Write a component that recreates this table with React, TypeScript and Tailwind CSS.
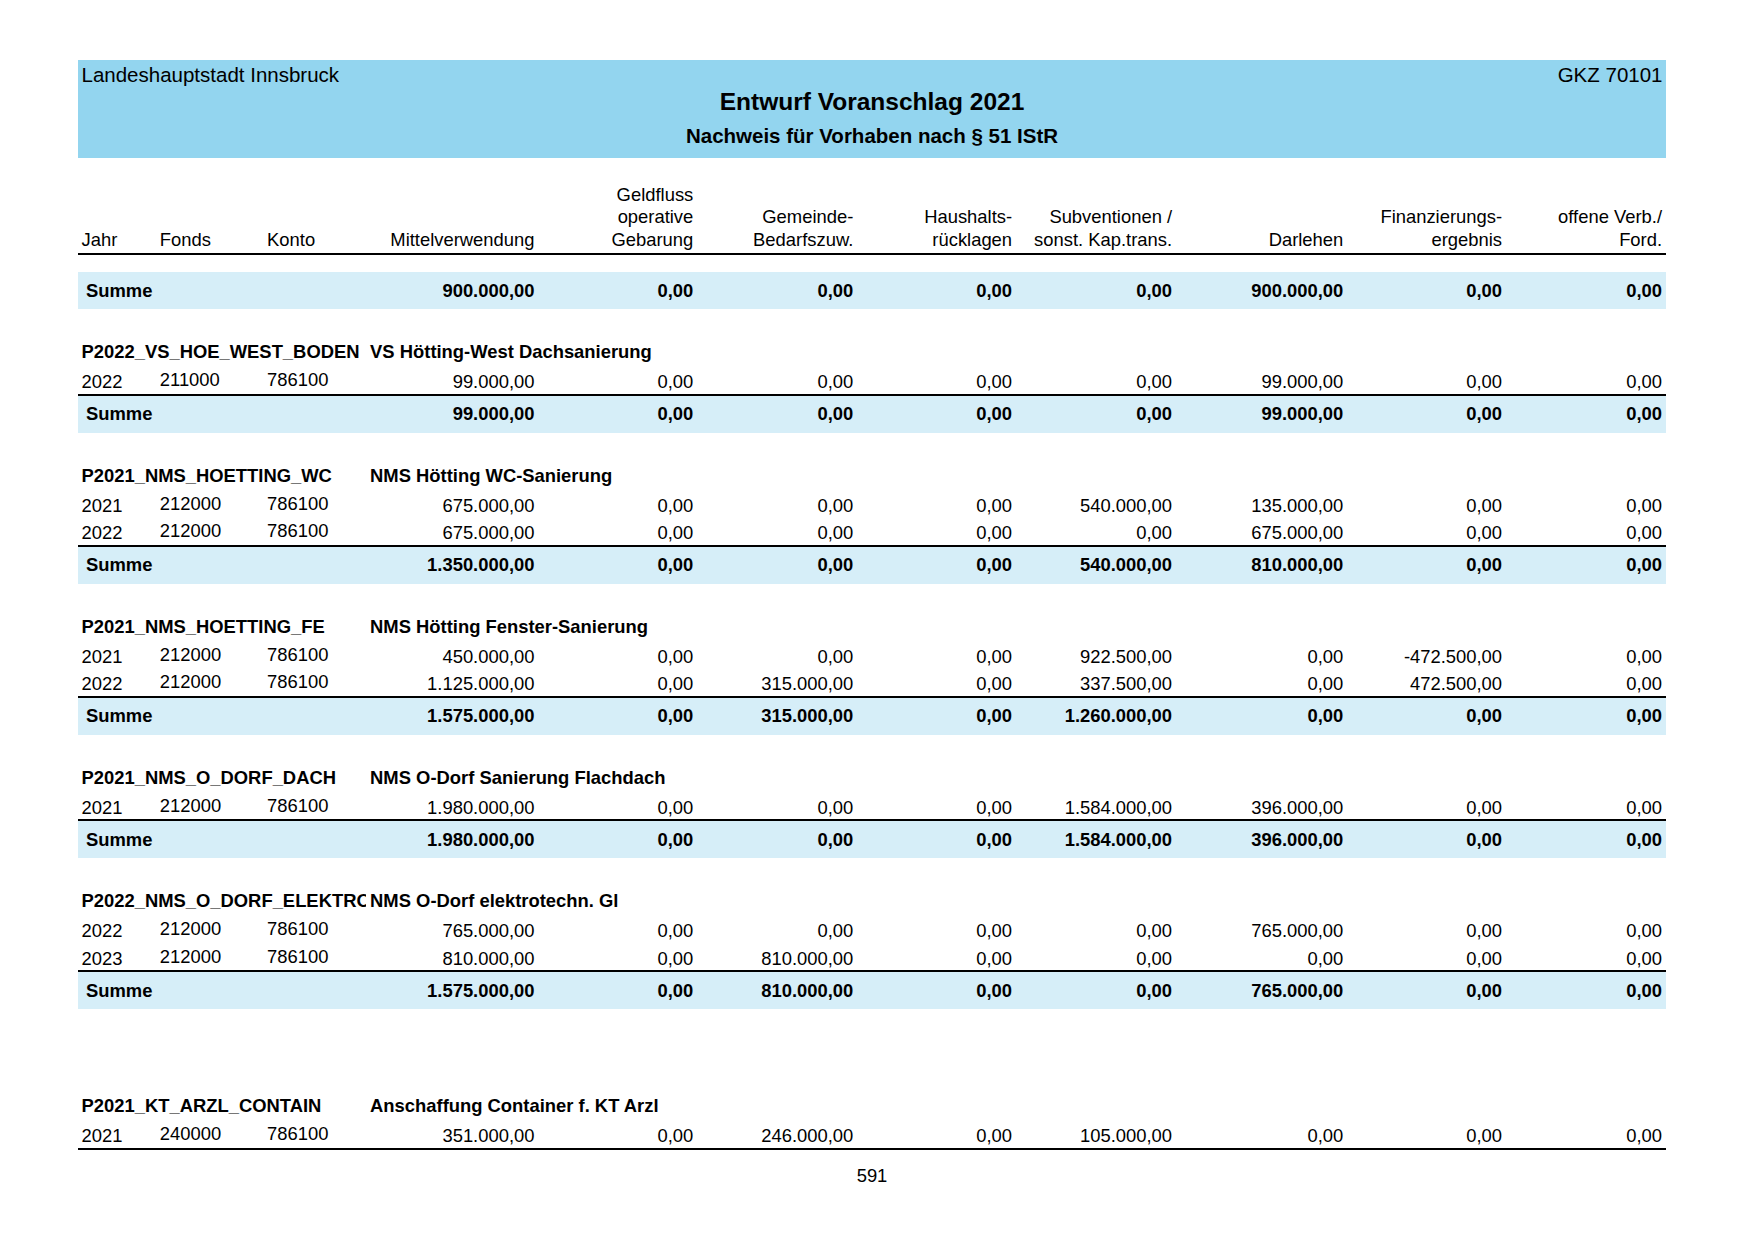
import React from 'react';

// Column widths measured off the printed page (A4 landscape at 150 dpi)
const GRID =
  'grid grid-cols-[78.3px_107.3px_103px_164.4px_158.8px_160px_158.8px_160px_171.2px_158.8px_160px] px-[3.5px]';

type Row = { jahr: string; fonds: string; konto: string; values: string[] };
type Block = { code: string; name: string; rows: Row[]; summe?: string[]; gap?: string };

const blocks: Block[] = [
  {
    code: 'P2022_VS_HOE_WEST_BODEN',
    name: 'VS Hötting-West Dachsanierung',
    rows: [
      { jahr: '2022', fonds: '211000', konto: '786100', values: ['99.000,00', '0,00', '0,00', '0,00', '0,00', '99.000,00', '0,00', '0,00'] },
    ],
    summe: ['99.000,00', '0,00', '0,00', '0,00', '0,00', '99.000,00', '0,00', '0,00'],
  },
  {
    code: 'P2021_NMS_HOETTING_WC',
    name: 'NMS Hötting WC-Sanierung',
    rows: [
      { jahr: '2021', fonds: '212000', konto: '786100', values: ['675.000,00', '0,00', '0,00', '0,00', '540.000,00', '135.000,00', '0,00', '0,00'] },
      { jahr: '2022', fonds: '212000', konto: '786100', values: ['675.000,00', '0,00', '0,00', '0,00', '0,00', '675.000,00', '0,00', '0,00'] },
    ],
    summe: ['1.350.000,00', '0,00', '0,00', '0,00', '540.000,00', '810.000,00', '0,00', '0,00'],
  },
  {
    code: 'P2021_NMS_HOETTING_FE',
    name: 'NMS Hötting Fenster-Sanierung',
    rows: [
      { jahr: '2021', fonds: '212000', konto: '786100', values: ['450.000,00', '0,00', '0,00', '0,00', '922.500,00', '0,00', '-472.500,00', '0,00'] },
      { jahr: '2022', fonds: '212000', konto: '786100', values: ['1.125.000,00', '0,00', '315.000,00', '0,00', '337.500,00', '0,00', '472.500,00', '0,00'] },
    ],
    summe: ['1.575.000,00', '0,00', '315.000,00', '0,00', '1.260.000,00', '0,00', '0,00', '0,00'],
  },
  {
    code: 'P2021_NMS_O_DORF_DACH',
    name: 'NMS O-Dorf Sanierung Flachdach',
    rows: [
      { jahr: '2021', fonds: '212000', konto: '786100', values: ['1.980.000,00', '0,00', '0,00', '0,00', '1.584.000,00', '396.000,00', '0,00', '0,00'] },
    ],
    summe: ['1.980.000,00', '0,00', '0,00', '0,00', '1.584.000,00', '396.000,00', '0,00', '0,00'],
  },
  {
    code: 'P2022_NMS_O_DORF_ELEKTRO',
    name: 'NMS O-Dorf elektrotechn. Gl',
    rows: [
      { jahr: '2022', fonds: '212000', konto: '786100', values: ['765.000,00', '0,00', '0,00', '0,00', '0,00', '765.000,00', '0,00', '0,00'] },
      { jahr: '2023', fonds: '212000', konto: '786100', values: ['810.000,00', '0,00', '810.000,00', '0,00', '0,00', '0,00', '0,00', '0,00'] },
    ],
    summe: ['1.575.000,00', '0,00', '810.000,00', '0,00', '0,00', '765.000,00', '0,00', '0,00'],
  },
  {
    code: 'P2021_KT_ARZL_CONTAIN',
    name: 'Anschaffung Container f. KT Arzl',
    gap: 'mt-[83px]',
    rows: [
      { jahr: '2021', fonds: '240000', konto: '786100', values: ['351.000,00', '0,00', '246.000,00', '0,00', '105.000,00', '0,00', '0,00', '0,00'] },
    ],
  },
];

function SummeRow({ values, line }: { values: string[]; line?: boolean }) {
  return (
    <div className={`${GRID} items-center bg-[#d6eef8] font-bold ${line ? 'border-t-2 border-black h-[39px]' : 'h-[37px]'}`}>
      <div className="col-span-3 pl-[4.5px]">Summe</div>
      {values.map((v, i) => (
        <div key={i} className="text-right whitespace-nowrap">{v}</div>
      ))}
    </div>
  );
}

export default function App() {
  return (
    <div className="w-[1754px] min-h-[1241px] bg-white text-black font-['Liberation_Sans',Arial,sans-serif] text-[18.4px]">
      <div className="ml-[78px] w-[1588px] pt-[60px]">
        {/* header band */}
        <div className="h-[98px] bg-[#93d5ef] px-[3.5px] flex flex-col">
          <div className="flex justify-between text-[20.5px] leading-[24px] pt-[3px]">
            <span>Landeshauptstadt Innsbruck</span>
            <span>GKZ 70101</span>
          </div>
          <div className="text-center font-bold text-[24.5px] leading-[28px] mt-[1px]">Entwurf Voranschlag 2021</div>
          <div className="text-center font-bold text-[20.5px] leading-[24px] mt-[8px]">Nachweis für Vorhaben nach § 51 IStR</div>
        </div>

        {/* column headings */}
        <div className={`${GRID} h-[97px] items-end leading-[22.4px] pb-[2px] border-b-2 border-black`}>
          <div>Jahr</div>
          <div>Fonds</div>
          <div>Konto</div>
          <div className="text-right">Mittelverwendung</div>
          <div className="text-right">Geldfluss<br />operative<br />Gebarung</div>
          <div className="text-right">Gemeinde-<br />Bedarfszuw.</div>
          <div className="text-right">Haushalts-<br />rücklagen</div>
          <div className="text-right whitespace-nowrap">Subventionen /<br />sonst. Kap.trans.</div>
          <div className="text-right">Darlehen</div>
          <div className="text-right">Finanzierungs-<br />ergebnis</div>
          <div className="text-right">offene Verb./<br />Ford.</div>
        </div>

        <div className="mt-[17px]">
          <SummeRow values={['900.000,00', '0,00', '0,00', '0,00', '0,00', '900.000,00', '0,00', '0,00']} />
        </div>

        {blocks.map((b) => (
          <div key={b.code} className={b.gap ?? 'mt-[29px]'}>
            <div className={`${GRID} h-[28px] items-center font-bold`}>
              <div className="col-span-3 w-[284px] overflow-hidden whitespace-nowrap">{b.code}</div>
              <div className="col-span-8 whitespace-nowrap">{b.name}</div>
            </div>
            {b.rows.map((r, i) => (
              <div
                key={i}
                className={`${GRID} items-center ${!b.summe && i === b.rows.length - 1 ? 'border-b-2 border-black h-[29.5px]' : 'h-[27.5px]'}`}
              >
                <div>{r.jahr}</div>
                <div className="pb-[4px]">{r.fonds}</div>
                <div className="pb-[4px]">{r.konto}</div>
                {r.values.map((v, j) => (
                  <div key={j} className="text-right whitespace-nowrap">{v}</div>
                ))}
              </div>
            ))}
            {b.summe && <SummeRow values={b.summe} line />}
          </div>
        ))}

        <div className="mt-[16px] leading-[20px] text-center">591</div>
      </div>
    </div>
  );
}
